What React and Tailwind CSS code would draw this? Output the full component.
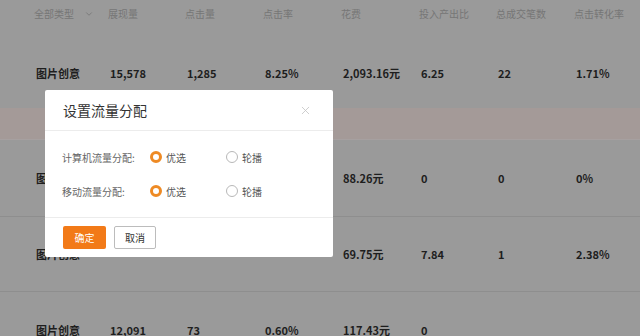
import { ChevronDown, X } from "lucide-react";

const cols = ["grid-cols-[74px_77px_78px_78px_78px_77px_78px_1fr]"];

const header = ["展现量", "点击量", "点击率", "花费", "投入产出比", "总成交笔数", "点击转化率"];

const rows = [
  { h: "h-[70px]", cells: ["图片创意", "15,578", "1,285", "8.25%", "2,093.16元", "6.25", "22", "1.71%"] },
  { band: true },
  { h: "h-[77px]", line: true, cells: ["图片创意", "", "", "", "88.26元", "0", "0", "0%"] },
  { h: "h-[75px]", line: true, cells: ["图片创意", "", "", "", "69.75元", "7.84", "1", "2.38%"] },
  { h: "h-[76px]", cells: ["图片创意", "12,091", "73", "0.60%", "117.43元", "0", "", ""] },
];

const Radio = ({ checked, label }) => (
  <div className="flex items-center gap-[4px]">
    {checked ? (
      <span className="w-[12px] h-[12px] rounded-full border-[3.5px] border-[#ee8a24] bg-white" />
    ) : (
      <span className="w-[12px] h-[12px] rounded-full border border-[#b8b8b8] bg-white" />
    )}
    <span className="text-[10px] text-[#555]">{label}</span>
  </div>
);

const App = () => {
  return (
    <div
      className="relative w-[640px] h-[336px] overflow-hidden bg-[#9a9a9a]"
      style={{ fontFamily: '"Noto Sans CJK SC", "Noto Sans", sans-serif' }}
    >
      <div className="flex flex-col">
        <div className={`grid ${cols[0]} h-[38px] pl-[34px] pt-[6px] text-[10px] text-[#767676]`}>
          <div className="flex items-start gap-[10px]">
            <span>全部类型</span>
            <ChevronDown className="w-[10px] h-[10px] mt-[3px]" strokeWidth={2} />
          </div>
          {header.map((t) => (
            <div key={t}>{t}</div>
          ))}
        </div>
        {rows.map((r, i) =>
          r.band ? (
            <div key={i} className="h-[32px] bg-[#a49a98] border-b border-[#a6a0a0]" />
          ) : (
            <div
              key={i}
              className={`grid ${cols[0]} ${r.h} pl-[36px] items-center text-[11px] font-semibold text-[#1e1e1e] ${r.line ? "border-b border-[#8e8e8e]" : ""}`}
            >
              {r.cells.map((c, j) => (
                <div key={j}>{c}</div>
              ))}
            </div>
          )
        )}
      </div>

      <div className="absolute left-[45px] top-[90px] w-[288px] h-[167px] bg-white rounded-[2px] flex flex-col">
        <div className="h-[41px] flex items-center justify-between pl-[18px] pr-[21px] border-b border-[#ececec]">
          <span className="text-[14px] text-[#333]">设置流量分配</span>
          <X className="w-[13px] h-[13px] text-[#c4c4c4]" strokeWidth={1.5} />
        </div>
        <div className="flex-1 flex flex-col justify-center gap-[19px] pl-[17px] border-b border-[#ececec]">
          <div className="flex items-center">
            <span className="w-[88px] text-[10px] text-[#666]">计算机流量分配:</span>
            <div className="w-[76px]"><Radio checked label="优选" /></div>
            <Radio label="轮播" />
          </div>
          <div className="flex items-center">
            <span className="w-[88px] text-[10px] text-[#666]">移动流量分配:</span>
            <div className="w-[76px]"><Radio checked label="优选" /></div>
            <Radio label="轮播" />
          </div>
        </div>
        <div className="h-[39px] flex items-center gap-[8px] pl-[18px]">
          <button className="w-[43px] h-[23px] rounded-[2px] bg-[#f27a18] text-white text-[10px]">确定</button>
          <button className="w-[42px] h-[23px] rounded-[2px] bg-white border border-[#bcbcbc] text-[#333] text-[10px]">取消</button>
        </div>
      </div>
    </div>
  );
};

export default App;
